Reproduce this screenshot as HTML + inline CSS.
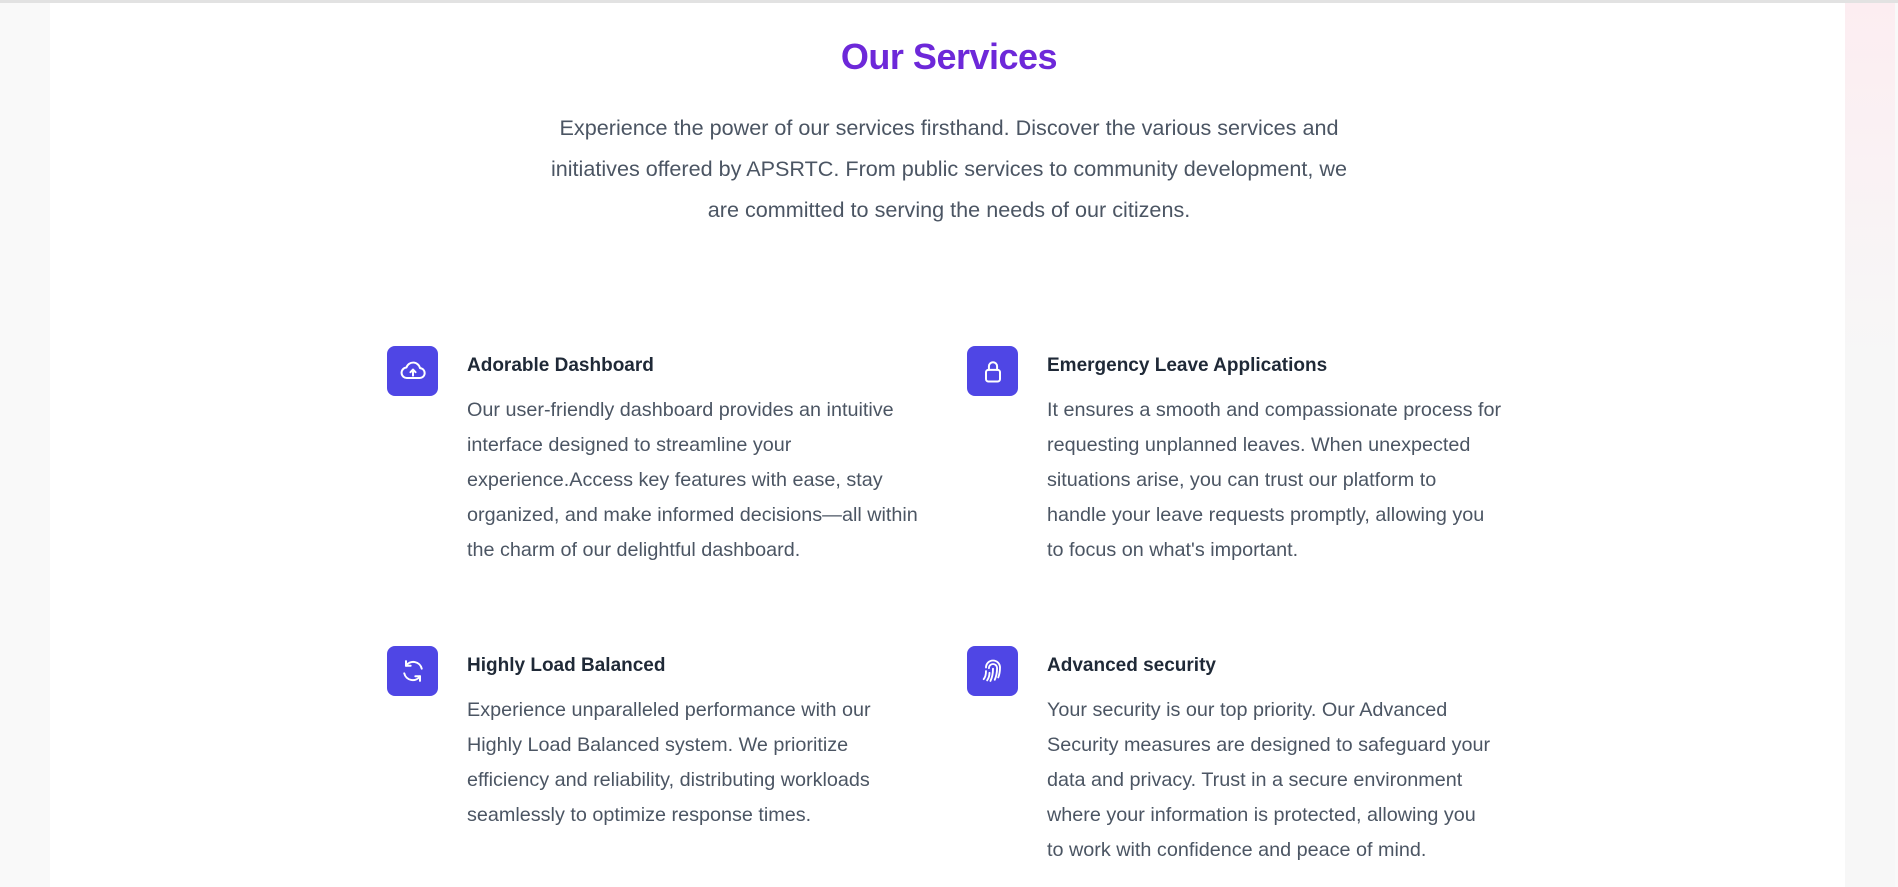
<!DOCTYPE html>
<html><head><meta charset="utf-8"><style>
html,body{margin:0;padding:0;width:1898px;height:887px;overflow:hidden;background:#f9f9f9;font-family:"Liberation Sans",sans-serif}
.top{position:absolute;left:0;top:0;width:1898px;height:3px;background:#e2e2e2}
.panel{position:absolute;left:50px;top:3px;width:1795px;height:884px;background:#fff}
.strip{position:absolute;left:1845px;top:3px;width:50px;height:884px;background:linear-gradient(#fcedf1,#f7f7f7 40%,#f7f7f7)}
h1{position:absolute;left:0;width:1898px;top:36px;margin:0;text-align:center;font-size:36px;font-weight:700;color:#6d28d9;letter-spacing:-0.5px}
.intro{position:absolute;left:399px;width:1100px;top:107px;text-align:center;font-size:21.6px;line-height:41px;color:#4b5563}
.item{position:absolute;}
.ic{position:absolute;left:0;top:0;width:51px;height:50px;border-radius:8px;background:#4f46e5;display:flex;align-items:center;justify-content:center}
.t{position:absolute;left:80px;top:9px;font-size:19px;font-weight:600;color:#1f2937;white-space:nowrap}
.d{position:absolute;left:80px;top:47px;font-size:19.8px;line-height:35px;color:#4b5563;white-space:nowrap}
</style></head><body>
<div class="top"></div><div class="panel"></div><div class="strip"></div>
<h1>Our Services</h1>
<div class="intro">Experience the power of our services firsthand. Discover the various services and<br>initiatives offered by APSRTC. From public services to community development, we<br>are committed to serving the needs of our citizens.</div>

<div class="item" style="left:387px;top:346px">
<div class="ic"><svg width="28" height="28" viewBox="0 0 24 24" fill="none" stroke="#fff" stroke-width="1.7" stroke-linecap="round" stroke-linejoin="round"><path d="M7 18a4.5 4.5 0 0 1-.6-9A6 6 0 0 1 18 9.5a4 4 0 0 1-.5 8.5H7z"/><path d="M12 16v-5M9.8 13L12 10.8 14.2 13"/></svg></div>
<div class="t">Adorable Dashboard</div>
<div class="d">Our user-friendly dashboard provides an intuitive<br>interface designed to streamline your<br>experience.Access key features with ease, stay<br>organized, and make informed decisions—all within<br>the charm of our delightful dashboard.</div></div>

<div class="item" style="left:967px;top:346px">
<div class="ic"><svg width="28" height="28" viewBox="0 0 24 24" fill="none" stroke="#fff" stroke-width="1.7" stroke-linecap="round"><rect x="6" y="11" width="12" height="10" rx="2"/><path d="M8.5 11V8a3.5 3.5 0 0 1 7 0v3"/></svg></div>
<div class="t">Emergency Leave Applications</div>
<div class="d">It ensures a smooth and compassionate process for<br>requesting unplanned leaves. When unexpected<br>situations arise, you can trust our platform to<br>handle your leave requests promptly, allowing you<br>to focus on what's important.</div></div>

<div class="item" style="left:387px;top:646px">
<div class="ic"><svg width="28" height="28" viewBox="0 0 24 24" fill="none" stroke="#fff" stroke-width="1.7" stroke-linecap="round" stroke-linejoin="round"><path d="M19.5 10A7.5 7.5 0 0 0 6 7.5M4.5 14A7.5 7.5 0 0 0 18 16.5"/><path d="M6 3.5v4h4M18 20.5v-4h-4"/></svg></div>
<div class="t">Highly Load Balanced</div>
<div class="d">Experience unparalleled performance with our<br>Highly Load Balanced system. We prioritize<br>efficiency and reliability, distributing workloads<br>seamlessly to optimize response times.</div></div>

<div class="item" style="left:967px;top:646px">
<div class="ic"><svg width="28" height="28" viewBox="0 0 24 24" fill="none" stroke="#fff" stroke-width="1.6" stroke-linecap="round"><path d="M6 9a6 6 0 0 1 12 0c0 3-.5 6-1.5 8.5"/><path d="M8.5 9.5a3.5 3.5 0 0 1 7 0c0 3.5-.7 7-2 10"/><path d="M12 10c0 4-.6 7.5-2.2 10.5"/><path d="M6 12c0 3-.7 5.5-2 7M9 13.5c0 2.5-.6 4.5-2 6.5"/></svg></div>
<div class="t">Advanced security</div>
<div class="d">Your security is our top priority. Our Advanced<br>Security measures are designed to safeguard your<br>data and privacy. Trust in a secure environment<br>where your information is protected, allowing you<br>to work with confidence and peace of mind.</div></div>
</body></html>
